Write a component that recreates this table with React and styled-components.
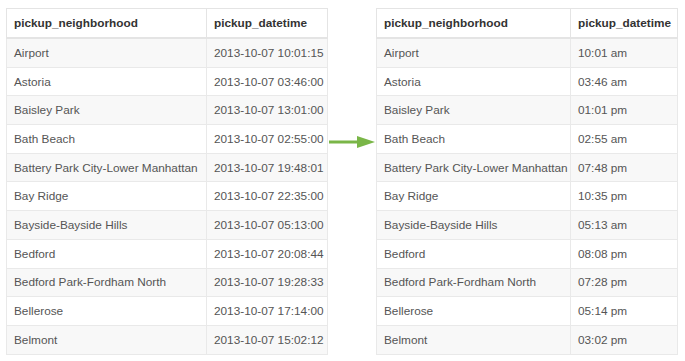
import React from 'react'
import styled, { createGlobalStyle } from 'styled-components'

const GlobalStyle = createGlobalStyle`
  html, body {
    margin: 0;
    padding: 0;
    background: #ffffff;
  }
  body {
    font-family: 'Liberation Sans', Arial, Helvetica, sans-serif;
  }
`

const Page = styled.div`
  display: flex;
  align-items: flex-start;
  padding: 8px 0 0 6px;
`

const Table = styled.table`
  border-collapse: collapse;
  table-layout: fixed;
  width: ${(p) => p.width}px;
  font-size: 11.8px;
  color: #555555;
  border: 1px solid #e4e4e4;
`

const Head = styled.th`
  text-align: left;
  font-weight: bold;
  color: #333333;
  height: 28px;
  padding: 0 7px;
  border: 1px solid #e4e4e4;
  border-bottom: 2px solid #e4e4e4;
  white-space: nowrap;
  overflow: hidden;
`

const Row = styled.tr`
  background: ${(p) => (p.striped ? '#f8f8f8' : '#ffffff')};
`

const Cell = styled.td`
  height: 27.7px;
  padding: 0 7px;
  border: 1px solid #e9e9e9;
  white-space: nowrap;
  overflow: hidden;
`

const ArrowBox = styled.div`
  width: 48px;
  margin-top: 128px;
  display: flex;
  justify-content: center;
`

const rows = [
  ['Airport', '2013-10-07 10:01:15', '10:01 am'],
  ['Astoria', '2013-10-07 03:46:00', '03:46 am'],
  ['Baisley Park', '2013-10-07 13:01:00', '01:01 pm'],
  ['Bath Beach', '2013-10-07 02:55:00', '02:55 am'],
  ['Battery Park City-Lower Manhattan', '2013-10-07 19:48:01', '07:48 pm'],
  ['Bay Ridge', '2013-10-07 22:35:00', '10:35 pm'],
  ['Bayside-Bayside Hills', '2013-10-07 05:13:00', '05:13 am'],
  ['Bedford', '2013-10-07 20:08:44', '08:08 pm'],
  ['Bedford Park-Fordham North', '2013-10-07 19:28:33', '07:28 pm'],
  ['Bellerose', '2013-10-07 17:14:00', '05:14 pm'],
  ['Belmont', '2013-10-07 15:02:12', '03:02 pm']
]

const DataTable = ({ widths, timeIndex }) => (
  <Table width={widths[0] + widths[1]}>
    <colgroup>
      <col style={{ width: widths[0] }} />
      <col style={{ width: widths[1] }} />
    </colgroup>
    <thead>
      <tr>
        <Head>pickup_neighborhood</Head>
        <Head>pickup_datetime</Head>
      </tr>
    </thead>
    <tbody>
      {rows.map((r, i) => (
        <Row key={r[0]} striped={i % 2 === 0}>
          <Cell>{r[0]}</Cell>
          <Cell>{r[timeIndex]}</Cell>
        </Row>
      ))}
    </tbody>
  </Table>
)

const Arrow = () => (
  <svg width='48' height='12' viewBox='0 0 48 12'>
    <rect x='1' y='4.5' width='30' height='3' fill='#7ab648' />
    <polygon points='29,0 47,6 29,12' fill='#7ab648' />
  </svg>
)

export default function App () {
  return (
    <>
      <GlobalStyle />
      <Page>
        <DataTable widths={[200, 121]} timeIndex={1} />
        <ArrowBox>
          <Arrow />
        </ArrowBox>
        <DataTable widths={[194, 107]} timeIndex={2} />
      </Page>
    </>
  )
}
